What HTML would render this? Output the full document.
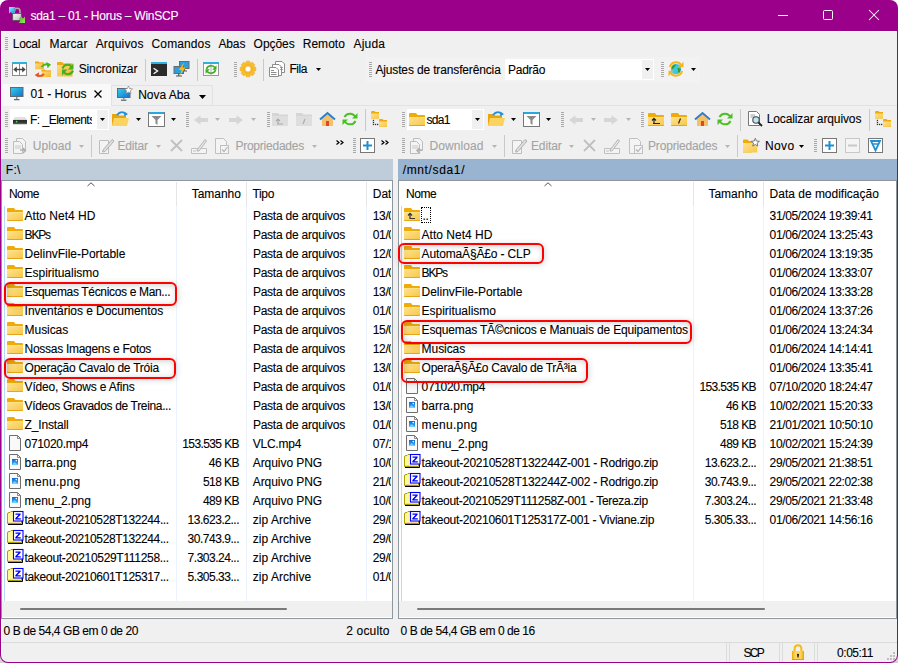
<!DOCTYPE html><html><head><meta charset="utf-8"><style>
html,body{margin:0;padding:0;background:#fff;}
body{width:898px;height:663px;position:relative;overflow:hidden;font-family:"Liberation Sans",sans-serif;font-size:12px;}
.t{position:absolute;white-space:nowrap;font-size:12px;line-height:15px;-webkit-text-stroke:0.1px currentColor;}
svg{overflow:visible}
</style></head><body><svg width="0" height="0" style="position:absolute"><defs><linearGradient id="fg" x1="0" y1="0" x2="1" y2="1"><stop offset="0" stop-color="#ffe290"/><stop offset="1" stop-color="#f7c745"/></linearGradient></defs></svg>
<div style="position:absolute;left:0px;top:652px;width:12px;height:11px;background:#d4d4d4"></div>
<div style="position:absolute;left:886px;top:652px;width:12px;height:11px;background:#d4d4d4"></div>
<div style="position:absolute;left:0px;top:0px;width:898px;height:663px;background:#9a0089;border-radius:8px 8px 8px 8px"></div>
<div style="position:absolute;left:1px;top:31px;width:896px;height:631px;background:#f0f0f0;border-radius:0 0 7px 7px"></div>
<div style="position:absolute;left:1px;top:31px;width:895px;height:1px;background:#fff"></div>
<div style="position:absolute;left:1px;top:31px;width:1px;height:624px;background:#fff"></div>
<svg style="position:absolute;left:9px;top:7px" width="16" height="16" viewBox="0 0 16 16"><defs><linearGradient id="lk" x1="0" y1="0" x2="1" y2="1"><stop offset="0" stop-color="#fafafa"/><stop offset="1" stop-color="#bdbdbd"/></linearGradient><linearGradient id="ba" x1="0" y1="0" x2="1" y2="1"><stop offset="0" stop-color="#7ff"/><stop offset="1" stop-color="#1a7fd8"/></linearGradient><linearGradient id="ga" x1="0" y1="0" x2="1" y2="1"><stop offset="0" stop-color="#4cb81e"/><stop offset="1" stop-color="#9be86a"/></linearGradient></defs><path d="M5.2 6.5V4.2Q5.2 1.3 8.1 1.3Q11 1.3 11 4.2V6.5" stroke="#a8a8a8" stroke-width="1.6" fill="none"/><path d="M0 0H6.8L5 1.8L7 3.8L3.8 7L1.8 5L0 6.8Z" fill="url(#ba)"/><rect x="3.7" y="6.4" width="8.6" height="7" fill="url(#lk)" stroke="#555" stroke-width=".8"/><path d="M16 9.5V16H9.5L11.5 14L9.6 12.1L12.1 9.6L14 11.5Z" fill="url(#ga)"/></svg>
<div class="t" style="left:30.40px;top:9.40px;letter-spacing:-0.241px;color:#fff;font-size:12px;">sda1 – 01 - Horus – WinSCP</div>
<div style="position:absolute;left:778px;top:15px;width:10px;height:1px;background:#fff"></div>
<div style="position:absolute;left:823px;top:10px;width:10px;height:10px;border:1px solid #fff;border-radius:1.5px;box-sizing:border-box"></div>
<svg style="position:absolute;left:869px;top:10px" width="10" height="10" viewBox="0 0 10 10"><path d="M0 0L10 10M10 0L0 10" stroke="#fff" stroke-width="1.05"/></svg>
<svg style="position:absolute;left:5px;top:37px" width="3" height="14" viewBox="0 0 3 14"><rect x="0" y="0" width="3" height="1" fill="#a8a8a8"/><rect x="0" y="2" width="3" height="1" fill="#a8a8a8"/><rect x="0" y="4" width="3" height="1" fill="#a8a8a8"/><rect x="0" y="6" width="3" height="1" fill="#a8a8a8"/><rect x="0" y="8" width="3" height="1" fill="#a8a8a8"/><rect x="0" y="10" width="3" height="1" fill="#a8a8a8"/><rect x="0" y="12" width="3" height="1" fill="#a8a8a8"/></svg>
<div class="t" style="left:12.80px;top:37.40px;letter-spacing:-0.272px;color:#000;font-size:12px;">Local</div>
<div class="t" style="left:49.60px;top:37.40px;letter-spacing:0.091px;color:#000;font-size:12px;">Marcar</div>
<div class="t" style="left:95.70px;top:37.40px;letter-spacing:0.145px;color:#000;font-size:12px;">Arquivos</div>
<div class="t" style="left:151.60px;top:37.40px;letter-spacing:0.110px;color:#000;font-size:12px;">Comandos</div>
<div class="t" style="left:218.40px;top:37.40px;letter-spacing:-0.115px;color:#000;font-size:12px;">Abas</div>
<div class="t" style="left:253.60px;top:37.40px;letter-spacing:-0.049px;color:#000;font-size:12px;">Opções</div>
<div class="t" style="left:302.70px;top:37.40px;letter-spacing:0.037px;color:#000;font-size:12px;">Remoto</div>
<div class="t" style="left:353.60px;top:37.40px;letter-spacing:0.178px;color:#000;font-size:12px;">Ajuda</div>
<svg style="position:absolute;left:5px;top:62px" width="3" height="16" viewBox="0 0 3 16"><rect x="0" y="0" width="3" height="1" fill="#a8a8a8"/><rect x="0" y="2" width="3" height="1" fill="#a8a8a8"/><rect x="0" y="4" width="3" height="1" fill="#a8a8a8"/><rect x="0" y="6" width="3" height="1" fill="#a8a8a8"/><rect x="0" y="8" width="3" height="1" fill="#a8a8a8"/><rect x="0" y="10" width="3" height="1" fill="#a8a8a8"/><rect x="0" y="12" width="3" height="1" fill="#a8a8a8"/><rect x="0" y="14" width="3" height="1" fill="#a8a8a8"/></svg>
<svg style="position:absolute;left:12px;top:62px" width="15" height="14" viewBox="0 0 15 14"><rect x=".5" y=".5" width="14" height="13" fill="#fff" stroke="#8a8a8a"/><rect x="0" y="0" width="15" height="2" fill="#2bb0e0"/><path d="M7.5 2V13.5" stroke="#8a8a8a"/><path d="M1.3 7.5L4.8 4.6V10.4Z M13.7 7.5L10.2 4.6V10.4Z" fill="#444"/><rect x="4" y="6.8" width="7" height="1.4" fill="#444"/></svg>
<svg style="position:absolute;left:34px;top:61px" width="17" height="16" viewBox="0 0 17 16"><defs><linearGradient id="yf" x1="0" y1="0" x2="1" y2="1"><stop offset="0" stop-color="#ffe08a"/><stop offset="1" stop-color="#f5b52a"/></linearGradient></defs><path d="M1 .5H4.5L5.5 1.5H10V8.2H1Z" fill="url(#yf)"/><path d="M1 .5H4.5L5.5 1.5H10V2.5H1Z" fill="#f2a91a"/><path d="M7.5 8.5H11L12 9.5H17V16H7.5Z" fill="url(#yf)"/><path d="M7.5 8.5H11L12 9.5H17V10.5H7.5Z" fill="#f2a91a"/><path d="M7.5 6Q10.5 2.2 14.3 3.6" stroke="#4bb21e" stroke-width="2" fill="none"/><path d="M12.2 1L17 3.4L13.6 7.2Z" fill="#4bb21e"/><path d="M10 12.8Q7 16.2 3.3 14.2" stroke="#e8561e" stroke-width="2" fill="none"/><path d="M5.2 11.3L.6 14L4.4 16.6Z" fill="#e8561e"/></svg>
<svg style="position:absolute;left:57px;top:62px" width="17" height="15" viewBox="0 0 17 15"><path d="M0 1Q0 0 1 0H5L6.5 1.5H15.5V14.5H0Z" fill="url(#yf)"/><path d="M0 1Q0 0 1 0H5L6.5 1.5H15.5V3H0Z" fill="#f2a91a"/><path d="M5.5 6.5Q7 2.8 10.8 2.8Q13.2 2.8 14.3 4.6" stroke="#45b020" stroke-width="2.1" fill="none"/><path d="M16.5 1.5V7.5H11Z" fill="#45b020"/><path d="M16 8.5Q14.5 12.2 10.7 12.2Q8.3 12.2 7.2 10.4" stroke="#45b020" stroke-width="2.1" fill="none"/><path d="M5 13.5V7.5H10.5Z" fill="#45b020"/></svg>
<div class="t" style="left:78.70px;top:62.40px;letter-spacing:-0.133px;color:#000;font-size:12px;">Sincronizar</div>
<div style="position:absolute;left:145px;top:59px;width:1px;height:22px;background:#c9c9c9"></div>
<svg style="position:absolute;left:151px;top:62px" width="16" height="14" viewBox="0 0 16 14"><rect x="0" y="0" width="16" height="14" fill="#2b2b2b"/><rect x="0" y="0" width="16" height="2" fill="#2bb0e0"/><path d="M2.6 6.2L6.6 9L2.6 11.8" stroke="#fff" stroke-width="1.3" fill="none"/></svg>
<svg style="position:absolute;left:173px;top:61px" width="17" height="16" viewBox="0 0 17 16"><rect x="6.5" y=".5" width="9.5" height="7" fill="#2aa0dc" stroke="#6a6a6a"/><path d="M9 10H14M11.25 7.5V10" stroke="#555" stroke-width="1.2"/><rect x="1" y="5.5" width="9.5" height="7" fill="#2aa0dc" stroke="#6a6a6a"/><path d="M3 15H9M5.75 12.5V15" stroke="#555" stroke-width="1.2"/><path d="M11 1.5L5.8 9H8.6L6.8 14.8L12.5 6.5H9.6Z" fill="#f7b819"/></svg>
<div style="position:absolute;left:197px;top:59px;width:1px;height:22px;background:#c9c9c9"></div>
<svg style="position:absolute;left:203px;top:62px" width="16" height="14" viewBox="0 0 16 14"><rect x=".5" y=".5" width="15" height="13" fill="#fff" stroke="#9a9a9a"/><rect x="0" y="0" width="16" height="2" fill="#2bb0e0"/><path d="M8 2V13.5" stroke="#b0b0b0"/><path d="M3.5 7Q4.5 3.8 8 3.8Q10.5 3.8 11.8 5.5" stroke="#3aab1c" stroke-width="1.6" fill="none"/><path d="M13.5 3.3V7.8H9.2Z" fill="#3aab1c"/><path d="M12.5 8Q11.5 11.2 8 11.2Q5.5 11.2 4.2 9.5" stroke="#3aab1c" stroke-width="1.6" fill="none"/><path d="M2.5 11.7V7.2H6.8Z" fill="#3aab1c"/></svg>
<svg style="position:absolute;left:234px;top:62px" width="3" height="16" viewBox="0 0 3 16"><rect x="0" y="0" width="3" height="1" fill="#a8a8a8"/><rect x="0" y="2" width="3" height="1" fill="#a8a8a8"/><rect x="0" y="4" width="3" height="1" fill="#a8a8a8"/><rect x="0" y="6" width="3" height="1" fill="#a8a8a8"/><rect x="0" y="8" width="3" height="1" fill="#a8a8a8"/><rect x="0" y="10" width="3" height="1" fill="#a8a8a8"/><rect x="0" y="12" width="3" height="1" fill="#a8a8a8"/><rect x="0" y="14" width="3" height="1" fill="#a8a8a8"/></svg>
<svg style="position:absolute;left:240px;top:61px" width="16" height="16" viewBox="0 0 16 16"><path d="M13.80 5.82L15.81 6.25L15.81 9.75L13.80 10.18L13.65 10.56L14.76 12.29L12.29 14.76L10.56 13.65L10.18 13.80L9.75 15.81L6.25 15.81L5.82 13.80L5.44 13.65L3.71 14.76L1.24 12.29L2.35 10.56L2.20 10.18L0.19 9.75L0.19 6.25L2.20 5.82L2.35 5.44L1.24 3.71L3.71 1.24L5.44 2.35L5.82 2.20L6.25 0.19L9.75 0.19L10.18 2.20L10.56 2.35L12.29 1.24L14.76 3.71L13.65 5.44Z" fill="#f7bd2a" stroke="#f0a818" stroke-width=".6"/><circle cx="8" cy="8" r="4.2" fill="none" stroke="#f5b21c" stroke-width="1"/><circle cx="8" cy="8" r="3" fill="#fbfbfb" stroke="#e8a010" stroke-width=".5"/></svg>
<div style="position:absolute;left:263px;top:59px;width:1px;height:22px;background:#c9c9c9"></div>
<svg style="position:absolute;left:269px;top:61px" width="16" height="16" viewBox="0 0 16 16"><path d="M6.5 .5H13L15.5 3V11.5H6.5Z" fill="#fff" stroke="#8c8c8c"/><path d="M3.5 3.5H10L12.5 6V14.5H3.5Z" fill="#fff" stroke="#8c8c8c"/><path d="M.5 6.5H7L9.5 9V15.5H.5Z" fill="#fff" stroke="#8c8c8c"/><path d="M2 9.5H5M2 11.5H7.5M2 13.5H7.5" stroke="#8c8c8c"/><path d="M11 6.5H14M11 8.5H14" stroke="#8c8c8c" stroke-width=".8"/></svg>
<div class="t" style="left:289.40px;top:62.40px;letter-spacing:-0.448px;color:#000;font-size:12px;">Fila</div>
<svg style="position:absolute;left:316px;top:68px" width="5" height="3" viewBox="0 0 5 3"><path d="M0 0H5L2.5 3Z" fill="#000"/></svg>
<div style="position:absolute;left:366px;top:57px;width:334px;height:26px;background:#f2f2f2"></div>
<svg style="position:absolute;left:369px;top:62px" width="3" height="16" viewBox="0 0 3 16"><rect x="0" y="0" width="3" height="1" fill="#a8a8a8"/><rect x="0" y="2" width="3" height="1" fill="#a8a8a8"/><rect x="0" y="4" width="3" height="1" fill="#a8a8a8"/><rect x="0" y="6" width="3" height="1" fill="#a8a8a8"/><rect x="0" y="8" width="3" height="1" fill="#a8a8a8"/><rect x="0" y="10" width="3" height="1" fill="#a8a8a8"/><rect x="0" y="12" width="3" height="1" fill="#a8a8a8"/><rect x="0" y="14" width="3" height="1" fill="#a8a8a8"/></svg>
<div class="t" style="left:375.40px;top:63.40px;letter-spacing:-0.144px;color:#000;font-size:12px;">Ajustes de transferência</div>
<div style="position:absolute;left:505px;top:59px;width:149px;height:21px;background:#fff"></div>
<div style="position:absolute;left:642px;top:60px;width:11px;height:19px;background:#f0f0f0"></div>
<svg style="position:absolute;left:645px;top:68px" width="5" height="3" viewBox="0 0 5 3"><path d="M0 0H5L2.5 3Z" fill="#000"/></svg>
<div class="t" style="left:508.00px;top:63.40px;letter-spacing:-0.258px;color:#000;font-size:12px;">Padrão</div>
<svg style="position:absolute;left:661px;top:62px" width="3" height="16" viewBox="0 0 3 16"><rect x="0" y="0" width="3" height="1" fill="#a8a8a8"/><rect x="0" y="2" width="3" height="1" fill="#a8a8a8"/><rect x="0" y="4" width="3" height="1" fill="#a8a8a8"/><rect x="0" y="6" width="3" height="1" fill="#a8a8a8"/><rect x="0" y="8" width="3" height="1" fill="#a8a8a8"/><rect x="0" y="10" width="3" height="1" fill="#a8a8a8"/><rect x="0" y="12" width="3" height="1" fill="#a8a8a8"/><rect x="0" y="14" width="3" height="1" fill="#a8a8a8"/></svg>
<svg style="position:absolute;left:668px;top:61px" width="16" height="16" viewBox="0 0 16 16"><circle cx="8" cy="8" r="5.2" fill="#3fc6e6"/><path d="M4.5 5Q6 3 8 3.5Q7.5 5.5 6 6.5Q5.5 8 4 8Q3 6.5 4.5 5Z M9.5 7Q11.5 6.5 12.8 8Q12.5 11 10.5 12Q9.5 10.5 10 9Z" fill="#3a9a2a"/><path d="M1.8 6Q3.5 1.2 8 1.2Q11.5 1.2 13 4" stroke="#fbb416" stroke-width="2" fill="none"/><path d="M15.5 0.8V6.2H10.2Z" fill="#fbb416"/><path d="M14.2 10Q12.5 14.8 8 14.8Q4.5 14.8 3 12" stroke="#fbb416" stroke-width="2" fill="none"/><path d="M.5 15.2V9.8H5.8Z" fill="#fbb416"/></svg>
<svg style="position:absolute;left:691px;top:68px" width="5" height="3" viewBox="0 0 5 3"><path d="M0 0H5L2.5 3Z" fill="#000"/></svg>
<div style="position:absolute;left:2px;top:84px;width:109px;height:22px;background:#f9f9f9"></div>
<svg style="position:absolute;left:10px;top:86px" width="14" height="15" viewBox="0 0 14 15"><defs><linearGradient id="scr" x1="0" y1="0" x2="1" y2="1"><stop offset="0" stop-color="#35d0f0"/><stop offset="1" stop-color="#1272c8"/></linearGradient></defs><rect x=".5" y="1.5" width="12.5" height="9" fill="url(#scr)" stroke="#5f6b73"/><path d="M6.75 11V13" stroke="#8a9299" stroke-width="1.5"/><path d="M4 13.6H9.5" stroke="#5f6b73" stroke-width="1.3"/></svg>
<div class="t" style="left:30.60px;top:87.40px;letter-spacing:-0.002px;color:#000;font-size:12px;">01 - Horus</div>
<svg style="position:absolute;left:94px;top:90px" width="8" height="8" viewBox="0 0 8 8"><path d="M.5 .5L7.5 7.5M7.5 .5L.5 7.5" stroke="#000" stroke-width="1.3"/></svg>
<div style="position:absolute;left:111px;top:85px;width:102px;height:21px;background:#f0f0f0;border:1px solid #e2e2e2;border-bottom:none;box-sizing:border-box"></div>
<svg style="position:absolute;left:117px;top:86px" width="16" height="15" viewBox="0 0 16 15"><rect x=".5" y="2.5" width="12.5" height="9" fill="url(#scr)" stroke="#5f6b73"/><path d="M6.75 12V13.5" stroke="#8a9299" stroke-width="1.5"/><path d="M4 14.2H9.5" stroke="#5f6b73" stroke-width="1.3"/><path d="M11.5 0L12.7 2.6L15.5 2.9L13.4 4.8L14 7.6L11.5 6.2L9 7.6L9.6 4.8L7.5 2.9L10.3 2.6Z" fill="#fff" stroke="#777" stroke-width=".6"/></svg>
<div class="t" style="left:138.20px;top:87.90px;letter-spacing:-0.033px;color:#000;font-size:12px;">Nova Aba</div>
<svg style="position:absolute;left:198.5px;top:94.5px" width="7" height="4" viewBox="0 0 7 4"><path d="M0 0H7L3.5 4Z" fill="#000"/></svg>
<div style="position:absolute;left:111px;top:105px;width:786px;height:1px;background:#e2e2e2"></div>
<svg style="position:absolute;left:5px;top:112px" width="3" height="16" viewBox="0 0 3 16"><rect x="0" y="0" width="3" height="1" fill="#a8a8a8"/><rect x="0" y="2" width="3" height="1" fill="#a8a8a8"/><rect x="0" y="4" width="3" height="1" fill="#a8a8a8"/><rect x="0" y="6" width="3" height="1" fill="#a8a8a8"/><rect x="0" y="8" width="3" height="1" fill="#a8a8a8"/><rect x="0" y="10" width="3" height="1" fill="#a8a8a8"/><rect x="0" y="12" width="3" height="1" fill="#a8a8a8"/><rect x="0" y="14" width="3" height="1" fill="#a8a8a8"/></svg>
<div style="position:absolute;left:10px;top:109px;width:99px;height:21px;background:#fff"></div>
<div style="position:absolute;left:97px;top:110px;width:11px;height:19px;background:#f0f0f0"></div>
<svg style="position:absolute;left:100px;top:118px" width="5" height="3" viewBox="0 0 5 3"><path d="M0 0H5L2.5 3Z" fill="#000"/></svg>
<svg style="position:absolute;left:13px;top:116px" width="14" height="9" viewBox="0 0 14 9"><path d="M1.8 1H12.2L13.6 3.8H.4Z" fill="#e2e2e4"/><rect x="0" y="3.9" width="14" height="4.2" fill="#2e2e2e"/><rect x="0" y="6.6" width="14" height="1.5" fill="#555"/><circle cx="3.6" cy="5.6" r=".85" fill="#2f2"/></svg>
<div style="position:absolute;left:30px;top:105px;width:62px;height:24px;overflow:hidden">
<div class="t" style="left:0.00px;top:8.40px;letter-spacing:-0.504px;color:#000;font-size:12px;">F: _Elements (F:)</div>
</div>
<svg style="position:absolute;left:112px;top:111px" width="17" height="16" viewBox="0 0 17 16"><path d="M0 3H6L7 4.5H14V14H0Z" fill="#e9a510"/><path d="M2 7H17L15 15H0Z" fill="#fcd35e"/><path d="M5 4Q9 -1 14 3" stroke="#1f8fe0" stroke-width="1.8" fill="none"/><path d="M12 0.5L16 3L12.3 5.5Z" fill="#1f8fe0"/></svg>
<svg style="position:absolute;left:136px;top:118px" width="5" height="3" viewBox="0 0 5 3"><path d="M0 0H5L2.5 3Z" fill="#000"/></svg>
<svg style="position:absolute;left:148px;top:111px" width="17" height="16" viewBox="0 0 17 16"><rect x=".5" y="1.5" width="16" height="14" fill="#fff" stroke="#777"/><rect x="1" y="1" width="15" height="2" fill="#2ba7e0"/><path d="M3.5 5H13.5L9.5 9V14L7.5 12.5V9Z" fill="#8a8a8a"/></svg>
<svg style="position:absolute;left:170.5px;top:118px" width="5" height="3" viewBox="0 0 5 3"><path d="M0 0H5L2.5 3Z" fill="#000"/></svg>
<svg style="position:absolute;left:186px;top:112px" width="3" height="16" viewBox="0 0 3 16"><rect x="0" y="0" width="3" height="1" fill="#a8a8a8"/><rect x="0" y="2" width="3" height="1" fill="#a8a8a8"/><rect x="0" y="4" width="3" height="1" fill="#a8a8a8"/><rect x="0" y="6" width="3" height="1" fill="#a8a8a8"/><rect x="0" y="8" width="3" height="1" fill="#a8a8a8"/><rect x="0" y="10" width="3" height="1" fill="#a8a8a8"/><rect x="0" y="12" width="3" height="1" fill="#a8a8a8"/><rect x="0" y="14" width="3" height="1" fill="#a8a8a8"/></svg>
<svg style="position:absolute;left:194px;top:114.5px" width="15" height="10" viewBox="0 0 15 10"><path d="M0 5L6.5 0.3V3H14V7H6.5V9.7Z" fill="#d6d6d6"/></svg>
<svg style="position:absolute;left:215px;top:118px" width="5" height="3" viewBox="0 0 5 3"><path d="M0 0H5L2.5 3Z" fill="#b5b5b5"/></svg>
<svg style="position:absolute;left:228.5px;top:114.5px" width="15" height="10" viewBox="0 0 15 10"><path d="M14 5L7.5 0.3V3H0V7H7.5V9.7Z" fill="#d6d6d6"/></svg>
<svg style="position:absolute;left:251px;top:118px" width="5" height="3" viewBox="0 0 5 3"><path d="M0 0H5L2.5 3Z" fill="#b5b5b5"/></svg>
<svg style="position:absolute;left:267px;top:112px" width="3" height="16" viewBox="0 0 3 16"><rect x="0" y="0" width="3" height="1" fill="#a8a8a8"/><rect x="0" y="2" width="3" height="1" fill="#a8a8a8"/><rect x="0" y="4" width="3" height="1" fill="#a8a8a8"/><rect x="0" y="6" width="3" height="1" fill="#a8a8a8"/><rect x="0" y="8" width="3" height="1" fill="#a8a8a8"/><rect x="0" y="10" width="3" height="1" fill="#a8a8a8"/><rect x="0" y="12" width="3" height="1" fill="#a8a8a8"/><rect x="0" y="14" width="3" height="1" fill="#a8a8a8"/></svg>
<svg style="position:absolute;left:272px;top:111px" width="16" height="16" viewBox="0 0 16 16"><path d="M0 2H6L7.5 3.5H16V15H0Z" fill="#d5d5d5"/><path d="M0 5H16V15H0Z" fill="#dedede"/><path d="M5 13H11M6 13V8M4 10L6 8L8 10" stroke="#aaa" stroke-width="1.1" fill="none"/></svg>
<svg style="position:absolute;left:296px;top:111px" width="16" height="16" viewBox="0 0 16 16"><path d="M0 2H6L7.5 3.5H16V15H0Z" fill="#d5d5d5"/><path d="M0 5H16V15H0Z" fill="#dedede"/><path d="M9 8L7 13" stroke="#aaa" stroke-width="1.1"/></svg>
<svg style="position:absolute;left:318.5px;top:111px" width="17" height="16" viewBox="0 0 17 16"><path d="M3 8V15H14V8L8.5 3Z" fill="#f5c06a"/><path d="M1 8.5L8.5 2L16 8.5" stroke="#2e7fc8" stroke-width="2" fill="none"/><rect x="7" y="10" width="3" height="5" fill="#e04a1a"/></svg>
<svg style="position:absolute;left:342px;top:111px" width="16" height="16" viewBox="0 0 16 16"><path d="M13.5 6.5A6 6 0 0 0 2.5 6M2.5 9.5A6 6 0 0 0 13.5 10" stroke="#4cc023" stroke-width="2" fill="none"/><path d="M15.5 2V7.5H10Z M.5 14V8.5H6Z" fill="#4cc023"/></svg>
<div style="position:absolute;left:365px;top:109px;width:1px;height:22px;background:#c9c9c9"></div>
<svg style="position:absolute;left:371px;top:111px" width="17" height="16" viewBox="0 0 17 16"><path d="M0 1Q0 0 1 0H3.5L4.5 1H8V7.6H0Z" fill="#efab08"/><path d="M0 2.4H8V7Q8 7.6 7.4 7.6H.6Q0 7.6 0 7Z" fill="url(#fg)"/><path d="M8 9Q8 8 9 8H11.5L12.5 9H16V15.7H8Z" fill="#efab08"/><path d="M8 10.4H16V15.1Q16 15.7 15.4 15.7H8.6Q8 15.7 8 15.1Z" fill="url(#fg)"/><rect x="1.8" y="8.8" width="1.3" height="1.3" fill="#333"/><rect x="1.8" y="10.8" width="1.3" height="1.3" fill="#333"/><rect x="1.8" y="12.8" width="1.3" height="1.3" fill="#333"/><rect x="3.9" y="12.8" width="1.3" height="1.3" fill="#333"/><rect x="6" y="12.8" width="1.3" height="1.3" fill="#333"/></svg>
<svg style="position:absolute;left:5px;top:138px" width="3" height="16" viewBox="0 0 3 16"><rect x="0" y="0" width="3" height="1" fill="#a8a8a8"/><rect x="0" y="2" width="3" height="1" fill="#a8a8a8"/><rect x="0" y="4" width="3" height="1" fill="#a8a8a8"/><rect x="0" y="6" width="3" height="1" fill="#a8a8a8"/><rect x="0" y="8" width="3" height="1" fill="#a8a8a8"/><rect x="0" y="10" width="3" height="1" fill="#a8a8a8"/><rect x="0" y="12" width="3" height="1" fill="#a8a8a8"/><rect x="0" y="14" width="3" height="1" fill="#a8a8a8"/></svg>
<svg style="position:absolute;left:12px;top:138px" width="16" height="16" viewBox="0 0 16 16"><path d="M4.5 .5H10.5L13.5 3.5V12.5H4.5Z" fill="#f4f4f4" stroke="#bdbdbd"/><path d="M1.5 3.5H7.5L10.5 6.5V15.5H1.5Z" fill="#f4f4f4" stroke="#bdbdbd"/><path d="M3 8H9M3 10H9" stroke="#c8c8c8"/><path d="M8 12H13M11 10L13.5 12.5L11 15" stroke="#b0b0b0" stroke-width="1.5" fill="none"/></svg>
<div class="t" style="left:32.80px;top:139.40px;letter-spacing:0.074px;color:#a3a3a3;font-size:12px;">Upload</div>
<svg style="position:absolute;left:79px;top:145px" width="5" height="3" viewBox="0 0 5 3"><path d="M0 0H5L2.5 3Z" fill="#b5b5b5"/></svg>
<div style="position:absolute;left:91px;top:135px;width:1px;height:22px;background:#c9c9c9"></div>
<svg style="position:absolute;left:99px;top:138px" width="16" height="16" viewBox="0 0 16 16"><path d="M.5 2.5H9.5V15.5H.5Z" fill="#f4f4f4" stroke="#bdbdbd"/><path d="M4 12L13 1.5L15 3L6 13.5L3.5 14Z" fill="#e0e0e0" stroke="#b0b0b0"/></svg>
<div class="t" style="left:117.40px;top:139.40px;letter-spacing:-0.129px;color:#a3a3a3;font-size:12px;">Editar</div>
<svg style="position:absolute;left:156px;top:145px" width="5" height="3" viewBox="0 0 5 3"><path d="M0 0H5L2.5 3Z" fill="#b5b5b5"/></svg>
<svg style="position:absolute;left:170px;top:139px" width="13" height="13" viewBox="0 0 13 13"><path d="M1 1L12 12M12 1L1 12" stroke="#c0c0c0" stroke-width="1.8"/></svg>
<svg style="position:absolute;left:191px;top:138px" width="16" height="16" viewBox="0 0 16 16"><path d="M.5 10.5H15.5V15.5H.5Z" fill="#f4f4f4" stroke="#c0c0c0"/><path d="M2 13H5" stroke="#c0c0c0"/><path d="M6 12L14 1.5L15.5 3L8 13H6Z" fill="#e6e6e6" stroke="#b5b5b5"/></svg>
<svg style="position:absolute;left:215px;top:138px" width="14" height="16" viewBox="0 0 14 16"><path d="M.5 .5H8.5L11.5 3.5V15.5H.5Z" fill="#f4f4f4" stroke="#c0c0c0"/><rect x="5.5" y="7.5" width="8" height="8" fill="#f4f4f4" stroke="#c0c0c0"/><path d="M7 11.5L9 13.5L12.5 9" stroke="#b5b5b5" stroke-width="1.2" fill="none"/></svg>
<div class="t" style="left:235.40px;top:139.40px;letter-spacing:-0.234px;color:#a3a3a3;font-size:12px;">Propriedades</div>
<svg style="position:absolute;left:312px;top:145px" width="5" height="3" viewBox="0 0 5 3"><path d="M0 0H5L2.5 3Z" fill="#b5b5b5"/></svg>
<svg style="position:absolute;left:336px;top:140px" width="8" height="5" viewBox="0 0 8 5"><path d="M.5 .5L3 2.5L.5 4.5M4.5 .5L7 2.5L4.5 4.5" stroke="#000" stroke-width="1.2" fill="none"/></svg>
<svg style="position:absolute;left:353px;top:138px" width="3" height="16" viewBox="0 0 3 16"><rect x="0" y="0" width="3" height="1" fill="#a8a8a8"/><rect x="0" y="2" width="3" height="1" fill="#a8a8a8"/><rect x="0" y="4" width="3" height="1" fill="#a8a8a8"/><rect x="0" y="6" width="3" height="1" fill="#a8a8a8"/><rect x="0" y="8" width="3" height="1" fill="#a8a8a8"/><rect x="0" y="10" width="3" height="1" fill="#a8a8a8"/><rect x="0" y="12" width="3" height="1" fill="#a8a8a8"/><rect x="0" y="14" width="3" height="1" fill="#a8a8a8"/></svg>
<svg style="position:absolute;left:360px;top:138px" width="15" height="15" viewBox="0 0 15 15"><rect x=".5" y=".5" width="14" height="14" fill="#fff" stroke="#777"/><path d="M7.5 3V12M3 7.5H12" stroke="#1e90d0" stroke-width="2"/></svg>
<svg style="position:absolute;left:381px;top:140px" width="8" height="5" viewBox="0 0 8 5"><path d="M.5 .5L3 2.5L.5 4.5M4.5 .5L7 2.5L4.5 4.5" stroke="#000" stroke-width="1.2" fill="none"/></svg>
<svg style="position:absolute;left:402px;top:112px" width="3" height="16" viewBox="0 0 3 16"><rect x="0" y="0" width="3" height="1" fill="#a8a8a8"/><rect x="0" y="2" width="3" height="1" fill="#a8a8a8"/><rect x="0" y="4" width="3" height="1" fill="#a8a8a8"/><rect x="0" y="6" width="3" height="1" fill="#a8a8a8"/><rect x="0" y="8" width="3" height="1" fill="#a8a8a8"/><rect x="0" y="10" width="3" height="1" fill="#a8a8a8"/><rect x="0" y="12" width="3" height="1" fill="#a8a8a8"/><rect x="0" y="14" width="3" height="1" fill="#a8a8a8"/></svg>
<div style="position:absolute;left:407px;top:109px;width:77px;height:21px;background:#fff"></div>
<div style="position:absolute;left:472px;top:110px;width:11px;height:19px;background:#f0f0f0"></div>
<svg style="position:absolute;left:475px;top:118px" width="5" height="3" viewBox="0 0 5 3"><path d="M0 0H5L2.5 3Z" fill="#000"/></svg>
<svg style="position:absolute;left:409px;top:111px" width="16" height="16" viewBox="0 0 16 16"><path d="M0 3Q0 2 1 2H7L8.5 4H15Q16 4 16 5V8H0Z" fill="#efab08"/><path d="M0 6.2H16V14Q16 15 15 15H1Q0 15 0 14Z" fill="url(#fg)"/><rect x="0" y="6.2" width="16" height=".8" fill="#ffeaa0" opacity=".8"/><path d="M0 14H16V14.2Q16 15 15 15H1Q0 15 0 14.2Z" fill="#e6a51a"/></svg>
<div class="t" style="left:426.40px;top:113.40px;letter-spacing:-0.672px;color:#000;font-size:12px;">sda1</div>
<svg style="position:absolute;left:488px;top:111px" width="17" height="16" viewBox="0 0 17 16"><path d="M0 3H6L7 4.5H14V14H0Z" fill="#e9a510"/><path d="M2 7H17L15 15H0Z" fill="#fcd35e"/><path d="M5 4Q9 -1 14 3" stroke="#1f8fe0" stroke-width="1.8" fill="none"/><path d="M12 0.5L16 3L12.3 5.5Z" fill="#1f8fe0"/></svg>
<svg style="position:absolute;left:511px;top:118px" width="5" height="3" viewBox="0 0 5 3"><path d="M0 0H5L2.5 3Z" fill="#000"/></svg>
<svg style="position:absolute;left:523px;top:111px" width="17" height="16" viewBox="0 0 17 16"><rect x=".5" y="1.5" width="16" height="14" fill="#fff" stroke="#777"/><rect x="1" y="1" width="15" height="2" fill="#2ba7e0"/><path d="M3.5 5H13.5L9.5 9V14L7.5 12.5V9Z" fill="#8a8a8a"/></svg>
<svg style="position:absolute;left:546px;top:118px" width="5" height="3" viewBox="0 0 5 3"><path d="M0 0H5L2.5 3Z" fill="#000"/></svg>
<svg style="position:absolute;left:561px;top:112px" width="3" height="16" viewBox="0 0 3 16"><rect x="0" y="0" width="3" height="1" fill="#a8a8a8"/><rect x="0" y="2" width="3" height="1" fill="#a8a8a8"/><rect x="0" y="4" width="3" height="1" fill="#a8a8a8"/><rect x="0" y="6" width="3" height="1" fill="#a8a8a8"/><rect x="0" y="8" width="3" height="1" fill="#a8a8a8"/><rect x="0" y="10" width="3" height="1" fill="#a8a8a8"/><rect x="0" y="12" width="3" height="1" fill="#a8a8a8"/><rect x="0" y="14" width="3" height="1" fill="#a8a8a8"/></svg>
<svg style="position:absolute;left:569px;top:114.5px" width="15" height="10" viewBox="0 0 15 10"><path d="M0 5L6.5 0.3V3H14V7H6.5V9.7Z" fill="#d6d6d6"/></svg>
<svg style="position:absolute;left:591px;top:118px" width="5" height="3" viewBox="0 0 5 3"><path d="M0 0H5L2.5 3Z" fill="#b5b5b5"/></svg>
<svg style="position:absolute;left:604px;top:114.5px" width="15" height="10" viewBox="0 0 15 10"><path d="M14 5L7.5 0.3V3H0V7H7.5V9.7Z" fill="#d6d6d6"/></svg>
<svg style="position:absolute;left:626px;top:118px" width="5" height="3" viewBox="0 0 5 3"><path d="M0 0H5L2.5 3Z" fill="#b5b5b5"/></svg>
<svg style="position:absolute;left:641px;top:112px" width="3" height="16" viewBox="0 0 3 16"><rect x="0" y="0" width="3" height="1" fill="#a8a8a8"/><rect x="0" y="2" width="3" height="1" fill="#a8a8a8"/><rect x="0" y="4" width="3" height="1" fill="#a8a8a8"/><rect x="0" y="6" width="3" height="1" fill="#a8a8a8"/><rect x="0" y="8" width="3" height="1" fill="#a8a8a8"/><rect x="0" y="10" width="3" height="1" fill="#a8a8a8"/><rect x="0" y="12" width="3" height="1" fill="#a8a8a8"/><rect x="0" y="14" width="3" height="1" fill="#a8a8a8"/></svg>
<svg style="position:absolute;left:648px;top:111px" width="16" height="16" viewBox="0 0 16 16"><path d="M0 3Q0 2 1 2H7L8.5 4H15Q16 4 16 5V8H0Z" fill="#efab08"/><path d="M0 6.2H16V14Q16 15 15 15H1Q0 15 0 14Z" fill="url(#fg)"/><rect x="0" y="6.2" width="16" height=".8" fill="#ffeaa0" opacity=".8"/><path d="M0 14H16V14.2Q16 15 15 15H1Q0 15 0 14.2Z" fill="#e6a51a"/></svg>
<svg style="position:absolute;left:648px;top:111px" width="16" height="16" viewBox="0 0 16 16"><path d="M5 12.5H12M6 12.5V7.5M4 9.5L6 7.3L8 9.5" stroke="#222" stroke-width="1.2" fill="none"/></svg>
<svg style="position:absolute;left:671px;top:111px" width="16" height="16" viewBox="0 0 16 16"><path d="M0 3Q0 2 1 2H7L8.5 4H15Q16 4 16 5V8H0Z" fill="#efab08"/><path d="M0 6.2H16V14Q16 15 15 15H1Q0 15 0 14Z" fill="url(#fg)"/><rect x="0" y="6.2" width="16" height=".8" fill="#ffeaa0" opacity=".8"/><path d="M0 14H16V14.2Q16 15 15 15H1Q0 15 0 14.2Z" fill="#e6a51a"/></svg>
<svg style="position:absolute;left:671px;top:111px" width="16" height="16" viewBox="0 0 16 16"><path d="M9.5 7.5L7.5 12.5" stroke="#222" stroke-width="1.2"/></svg>
<svg style="position:absolute;left:693.5px;top:111px" width="17" height="16" viewBox="0 0 17 16"><path d="M3 8V15H14V8L8.5 3Z" fill="#f5c06a"/><path d="M1 8.5L8.5 2L16 8.5" stroke="#2e7fc8" stroke-width="2" fill="none"/><rect x="7" y="10" width="3" height="5" fill="#e04a1a"/></svg>
<svg style="position:absolute;left:716.5px;top:111px" width="16" height="16" viewBox="0 0 16 16"><path d="M13.5 6.5A6 6 0 0 0 2.5 6M2.5 9.5A6 6 0 0 0 13.5 10" stroke="#4cc023" stroke-width="2" fill="none"/><path d="M15.5 2V7.5H10Z M.5 14V8.5H6Z" fill="#4cc023"/></svg>
<div style="position:absolute;left:740px;top:109px;width:1px;height:22px;background:#c9c9c9"></div>
<svg style="position:absolute;left:748px;top:111px" width="15" height="16" viewBox="0 0 15 16"><path d="M.5 .5H8.5L11.5 3.5V14.5H.5Z" fill="#fff" stroke="#777"/><path d="M2.5 4H7M2.5 6H9" stroke="#999"/><circle cx="8" cy="9" r="3.2" fill="#bfe6f7" stroke="#4a4a4a" stroke-width="1.1"/><path d="M10.3 11.3L14 15" stroke="#222" stroke-width="1.8"/></svg>
<div class="t" style="left:766.70px;top:112.40px;letter-spacing:-0.119px;color:#000;font-size:12px;">Localizar arquivos</div>
<div style="position:absolute;left:869px;top:109px;width:1px;height:22px;background:#c9c9c9"></div>
<svg style="position:absolute;left:875px;top:111px" width="17" height="16" viewBox="0 0 17 16"><path d="M0 1Q0 0 1 0H3.5L4.5 1H8V7.6H0Z" fill="#efab08"/><path d="M0 2.4H8V7Q8 7.6 7.4 7.6H.6Q0 7.6 0 7Z" fill="url(#fg)"/><path d="M8 9Q8 8 9 8H11.5L12.5 9H16V15.7H8Z" fill="#efab08"/><path d="M8 10.4H16V15.1Q16 15.7 15.4 15.7H8.6Q8 15.7 8 15.1Z" fill="url(#fg)"/><rect x="1.8" y="8.8" width="1.3" height="1.3" fill="#333"/><rect x="1.8" y="10.8" width="1.3" height="1.3" fill="#333"/><rect x="1.8" y="12.8" width="1.3" height="1.3" fill="#333"/><rect x="3.9" y="12.8" width="1.3" height="1.3" fill="#333"/><rect x="6" y="12.8" width="1.3" height="1.3" fill="#333"/></svg>
<svg style="position:absolute;left:402px;top:138px" width="3" height="16" viewBox="0 0 3 16"><rect x="0" y="0" width="3" height="1" fill="#a8a8a8"/><rect x="0" y="2" width="3" height="1" fill="#a8a8a8"/><rect x="0" y="4" width="3" height="1" fill="#a8a8a8"/><rect x="0" y="6" width="3" height="1" fill="#a8a8a8"/><rect x="0" y="8" width="3" height="1" fill="#a8a8a8"/><rect x="0" y="10" width="3" height="1" fill="#a8a8a8"/><rect x="0" y="12" width="3" height="1" fill="#a8a8a8"/><rect x="0" y="14" width="3" height="1" fill="#a8a8a8"/></svg>
<svg style="position:absolute;left:409px;top:138px" width="16" height="16" viewBox="0 0 16 16"><path d="M4.5 .5H10.5L13.5 3.5V12.5H4.5Z" fill="#f4f4f4" stroke="#bdbdbd"/><path d="M1.5 3.5H7.5L10.5 6.5V15.5H1.5Z" fill="#f4f4f4" stroke="#bdbdbd"/><path d="M3 8H9M3 10H9" stroke="#c8c8c8"/><path d="M8 12H13M10.5 10L8 12.5L10.5 15" stroke="#b0b0b0" stroke-width="1.5" fill="none"/></svg>
<div class="t" style="left:429.40px;top:139.40px;letter-spacing:0.089px;color:#a3a3a3;font-size:12px;">Download</div>
<svg style="position:absolute;left:492px;top:145px" width="5" height="3" viewBox="0 0 5 3"><path d="M0 0H5L2.5 3Z" fill="#b5b5b5"/></svg>
<div style="position:absolute;left:504px;top:135px;width:1px;height:22px;background:#c9c9c9"></div>
<svg style="position:absolute;left:512px;top:138px" width="16" height="16" viewBox="0 0 16 16"><path d="M.5 2.5H9.5V15.5H.5Z" fill="#f4f4f4" stroke="#bdbdbd"/><path d="M4 12L13 1.5L15 3L6 13.5L3.5 14Z" fill="#e0e0e0" stroke="#b0b0b0"/></svg>
<div class="t" style="left:530.90px;top:139.40px;letter-spacing:-0.089px;color:#a3a3a3;font-size:12px;">Editar</div>
<svg style="position:absolute;left:569px;top:145px" width="5" height="3" viewBox="0 0 5 3"><path d="M0 0H5L2.5 3Z" fill="#b5b5b5"/></svg>
<svg style="position:absolute;left:583px;top:139px" width="13" height="13" viewBox="0 0 13 13"><path d="M1 1L12 12M12 1L1 12" stroke="#c0c0c0" stroke-width="1.8"/></svg>
<svg style="position:absolute;left:604px;top:138px" width="16" height="16" viewBox="0 0 16 16"><path d="M.5 10.5H15.5V15.5H.5Z" fill="#f4f4f4" stroke="#c0c0c0"/><path d="M2 13H5" stroke="#c0c0c0"/><path d="M6 12L14 1.5L15.5 3L8 13H6Z" fill="#e6e6e6" stroke="#b5b5b5"/></svg>
<svg style="position:absolute;left:629px;top:138px" width="14" height="16" viewBox="0 0 14 16"><path d="M.5 .5H8.5L11.5 3.5V15.5H.5Z" fill="#f4f4f4" stroke="#c0c0c0"/><rect x="5.5" y="7.5" width="8" height="8" fill="#f4f4f4" stroke="#c0c0c0"/><path d="M7 11.5L9 13.5L12.5 9" stroke="#b5b5b5" stroke-width="1.2" fill="none"/></svg>
<div class="t" style="left:648.00px;top:139.40px;letter-spacing:-0.180px;color:#a3a3a3;font-size:12px;">Propriedades</div>
<svg style="position:absolute;left:725px;top:145px" width="5" height="3" viewBox="0 0 5 3"><path d="M0 0H5L2.5 3Z" fill="#b5b5b5"/></svg>
<div style="position:absolute;left:737px;top:135px;width:1px;height:22px;background:#c9c9c9"></div>
<svg style="position:absolute;left:743px;top:138px" width="17" height="16" viewBox="0 0 17 16"><path d="M0 2.5Q0 1.5 1 1.5H4.5L6 3H9V14.5H0Z" fill="#efab08"/><path d="M0 5H14.2V14.5H0Z" fill="url(#fg)"/><path d="M12.30 0.30L13.42 3.06L16.39 3.27L14.11 5.19L14.83 8.08L12.30 6.50L9.77 8.08L10.49 5.19L8.21 3.27L11.18 3.06Z" fill="#fff" stroke="#777" stroke-width="1"/></svg>
<div class="t" style="left:764.90px;top:139.40px;letter-spacing:0.395px;color:#000;font-size:12px;">Novo</div>
<svg style="position:absolute;left:799px;top:145px" width="5" height="3" viewBox="0 0 5 3"><path d="M0 0H5L2.5 3Z" fill="#000"/></svg>
<svg style="position:absolute;left:814px;top:139px" width="3" height="14" viewBox="0 0 3 14"><rect x="0" y="0" width="3" height="1" fill="#a8a8a8"/><rect x="0" y="2" width="3" height="1" fill="#a8a8a8"/><rect x="0" y="4" width="3" height="1" fill="#a8a8a8"/><rect x="0" y="6" width="3" height="1" fill="#a8a8a8"/><rect x="0" y="8" width="3" height="1" fill="#a8a8a8"/><rect x="0" y="10" width="3" height="1" fill="#a8a8a8"/><rect x="0" y="12" width="3" height="1" fill="#a8a8a8"/></svg>
<svg style="position:absolute;left:822px;top:138px" width="15" height="15" viewBox="0 0 15 15"><rect x=".5" y=".5" width="14" height="14" fill="#fff" stroke="#777"/><path d="M7.5 3V12M3 7.5H12" stroke="#1e90d0" stroke-width="2"/></svg>
<svg style="position:absolute;left:845px;top:138px" width="15" height="15" viewBox="0 0 15 15"><rect x=".5" y=".5" width="14" height="14" fill="#f4f4f4" stroke="#c8c8c8"/><path d="M3 7.5H12" stroke="#c8c8c8" stroke-width="2"/></svg>
<svg style="position:absolute;left:868px;top:138px" width="15" height="15" viewBox="0 0 15 15"><rect x=".5" y=".5" width="14" height="14" fill="#fff" stroke="#777"/><path d="M3 3H12L7.5 12.5Z" fill="none" stroke="#1e90d0" stroke-width="1.8"/><path d="M4.5 6H10.5" stroke="#1e90d0" stroke-width="1.5"/></svg>
<div style="position:absolute;left:1px;top:159px;width:392px;height:21px;background:#bfcddb"></div>
<div class="t" style="left:5.70px;top:163.40px;letter-spacing:0.358px;color:#000;font-size:12px;">F:\</div>
<div style="position:absolute;left:1px;top:180px;width:392px;height:439px;background:#fff;border:1px solid #8e969e;box-sizing:border-box"></div>
<div style="position:absolute;left:176px;top:182px;width:1px;height:24px;background:#e5e5e5"></div>
<div style="position:absolute;left:246px;top:182px;width:1px;height:24px;background:#e5e5e5"></div>
<div style="position:absolute;left:366px;top:182px;width:1px;height:24px;background:#e5e5e5"></div>
<div style="position:absolute;left:4px;top:206px;width:1px;height:395px;background:#bcd8f8"></div>
<div style="position:absolute;left:176px;top:206px;width:1px;height:395px;background:#edf3fc"></div>
<div style="position:absolute;left:246px;top:206px;width:1px;height:395px;background:#edf3fc"></div>
<div style="position:absolute;left:366px;top:206px;width:1px;height:395px;background:#edf3fc"></div>
<div style="position:absolute;left:2px;top:601px;width:390px;height:16px;background:#f0f0f0"></div>
<div style="position:absolute;left:2px;top:617px;width:390px;height:1px;background:#fff"></div>
<div style="position:absolute;left:2px;top:181px;width:389px;height:420px;overflow:hidden">
<div class="t" style="left:6.90px;top:6.40px;letter-spacing:-0.465px;color:#000;font-size:12px;">Nome</div>
<svg style="position:absolute;left:85px;top:1px" width="8" height="5" viewBox="0 0 8 5"><path d="M.5 4L4 .8L7.5 4" stroke="#555" stroke-width="1" fill="none"/></svg>
<div class="t" style="left:189.80px;top:6.40px;letter-spacing:-0.060px;color:#000;font-size:12px;">Tamanho</div>
<div class="t" style="left:250.40px;top:6.40px;letter-spacing:-0.329px;color:#000;font-size:12px;">Tipo</div>
<div class="t" style="left:370.80px;top:6.40px;letter-spacing:-0.010px;color:#000;font-size:12px;">Data de modificação</div>
<svg style="position:absolute;left:5px;top:25px" width="16" height="16" viewBox="0 0 16 16"><path d="M0 3Q0 2 1 2H7L8.5 4H15Q16 4 16 5V8H0Z" fill="#efab08"/><path d="M0 6.2H16V14Q16 15 15 15H1Q0 15 0 14Z" fill="url(#fg)"/><rect x="0" y="6.2" width="16" height=".8" fill="#ffeaa0" opacity=".8"/><path d="M0 14H16V14.2Q16 15 15 15H1Q0 15 0 14.2Z" fill="#e6a51a"/></svg>
<div class="t" style="left:22.60px;top:28.10px;letter-spacing:0.012px;color:#000;font-size:12px;">Atto Net4 HD</div>
<div class="t" style="left:250.90px;top:28.10px;letter-spacing:-0.233px;color:#000;font-size:12px;">Pasta de arquivos</div>
<div class="t" style="left:370.80px;top:28.10px;letter-spacing:-0.375px;color:#000;font-size:12px;">13/06/2024 13:24:34</div>
<svg style="position:absolute;left:5px;top:44px" width="16" height="16" viewBox="0 0 16 16"><path d="M0 3Q0 2 1 2H7L8.5 4H15Q16 4 16 5V8H0Z" fill="#efab08"/><path d="M0 6.2H16V14Q16 15 15 15H1Q0 15 0 14Z" fill="url(#fg)"/><rect x="0" y="6.2" width="16" height=".8" fill="#ffeaa0" opacity=".8"/><path d="M0 14H16V14.2Q16 15 15 15H1Q0 15 0 14.2Z" fill="#e6a51a"/></svg>
<div class="t" style="left:22.60px;top:47.10px;letter-spacing:-1.200px;color:#000;font-size:12px;">BKPs</div>
<div class="t" style="left:250.90px;top:47.10px;letter-spacing:-0.233px;color:#000;font-size:12px;">Pasta de arquivos</div>
<div class="t" style="left:370.80px;top:47.10px;letter-spacing:-0.375px;color:#000;font-size:12px;">01/06/2024 13:24:34</div>
<svg style="position:absolute;left:5px;top:63px" width="16" height="16" viewBox="0 0 16 16"><path d="M0 3Q0 2 1 2H7L8.5 4H15Q16 4 16 5V8H0Z" fill="#efab08"/><path d="M0 6.2H16V14Q16 15 15 15H1Q0 15 0 14Z" fill="url(#fg)"/><rect x="0" y="6.2" width="16" height=".8" fill="#ffeaa0" opacity=".8"/><path d="M0 14H16V14.2Q16 15 15 15H1Q0 15 0 14.2Z" fill="#e6a51a"/></svg>
<div class="t" style="left:22.60px;top:66.10px;letter-spacing:-0.033px;color:#000;font-size:12px;">DelinvFile-Portable</div>
<div class="t" style="left:250.90px;top:66.10px;letter-spacing:-0.233px;color:#000;font-size:12px;">Pasta de arquivos</div>
<div class="t" style="left:370.80px;top:66.10px;letter-spacing:-0.375px;color:#000;font-size:12px;">12/06/2024 13:24:34</div>
<svg style="position:absolute;left:5px;top:82px" width="16" height="16" viewBox="0 0 16 16"><path d="M0 3Q0 2 1 2H7L8.5 4H15Q16 4 16 5V8H0Z" fill="#efab08"/><path d="M0 6.2H16V14Q16 15 15 15H1Q0 15 0 14Z" fill="url(#fg)"/><rect x="0" y="6.2" width="16" height=".8" fill="#ffeaa0" opacity=".8"/><path d="M0 14H16V14.2Q16 15 15 15H1Q0 15 0 14.2Z" fill="#e6a51a"/></svg>
<div class="t" style="left:22.60px;top:85.10px;letter-spacing:-0.031px;color:#000;font-size:12px;">Espiritualismo</div>
<div class="t" style="left:250.90px;top:85.10px;letter-spacing:-0.233px;color:#000;font-size:12px;">Pasta de arquivos</div>
<div class="t" style="left:370.80px;top:85.10px;letter-spacing:-0.375px;color:#000;font-size:12px;">01/06/2024 13:24:34</div>
<svg style="position:absolute;left:5px;top:101px" width="16" height="16" viewBox="0 0 16 16"><path d="M0 3Q0 2 1 2H7L8.5 4H15Q16 4 16 5V8H0Z" fill="#efab08"/><path d="M0 6.2H16V14Q16 15 15 15H1Q0 15 0 14Z" fill="url(#fg)"/><rect x="0" y="6.2" width="16" height=".8" fill="#ffeaa0" opacity=".8"/><path d="M0 14H16V14.2Q16 15 15 15H1Q0 15 0 14.2Z" fill="#e6a51a"/></svg>
<div class="t" style="left:22.60px;top:104.10px;letter-spacing:-0.339px;color:#000;font-size:12px;">Esquemas Técnicos e Man...</div>
<div class="t" style="left:250.90px;top:104.10px;letter-spacing:-0.233px;color:#000;font-size:12px;">Pasta de arquivos</div>
<div class="t" style="left:370.80px;top:104.10px;letter-spacing:-0.375px;color:#000;font-size:12px;">13/06/2024 13:24:34</div>
<svg style="position:absolute;left:5px;top:120px" width="16" height="16" viewBox="0 0 16 16"><path d="M0 3Q0 2 1 2H7L8.5 4H15Q16 4 16 5V8H0Z" fill="#efab08"/><path d="M0 6.2H16V14Q16 15 15 15H1Q0 15 0 14Z" fill="url(#fg)"/><rect x="0" y="6.2" width="16" height=".8" fill="#ffeaa0" opacity=".8"/><path d="M0 14H16V14.2Q16 15 15 15H1Q0 15 0 14.2Z" fill="#e6a51a"/></svg>
<div class="t" style="left:22.60px;top:123.10px;letter-spacing:-0.038px;color:#000;font-size:12px;">Inventários e Documentos</div>
<div class="t" style="left:250.90px;top:123.10px;letter-spacing:-0.233px;color:#000;font-size:12px;">Pasta de arquivos</div>
<div class="t" style="left:370.80px;top:123.10px;letter-spacing:-0.375px;color:#000;font-size:12px;">01/06/2024 13:24:34</div>
<svg style="position:absolute;left:5px;top:139px" width="16" height="16" viewBox="0 0 16 16"><path d="M0 3Q0 2 1 2H7L8.5 4H15Q16 4 16 5V8H0Z" fill="#efab08"/><path d="M0 6.2H16V14Q16 15 15 15H1Q0 15 0 14Z" fill="url(#fg)"/><rect x="0" y="6.2" width="16" height=".8" fill="#ffeaa0" opacity=".8"/><path d="M0 14H16V14.2Q16 15 15 15H1Q0 15 0 14.2Z" fill="#e6a51a"/></svg>
<div class="t" style="left:22.60px;top:142.10px;letter-spacing:-0.069px;color:#000;font-size:12px;">Musicas</div>
<div class="t" style="left:250.90px;top:142.10px;letter-spacing:-0.233px;color:#000;font-size:12px;">Pasta de arquivos</div>
<div class="t" style="left:370.80px;top:142.10px;letter-spacing:-0.375px;color:#000;font-size:12px;">15/06/2024 13:24:34</div>
<svg style="position:absolute;left:5px;top:158px" width="16" height="16" viewBox="0 0 16 16"><path d="M0 3Q0 2 1 2H7L8.5 4H15Q16 4 16 5V8H0Z" fill="#efab08"/><path d="M0 6.2H16V14Q16 15 15 15H1Q0 15 0 14Z" fill="url(#fg)"/><rect x="0" y="6.2" width="16" height=".8" fill="#ffeaa0" opacity=".8"/><path d="M0 14H16V14.2Q16 15 15 15H1Q0 15 0 14.2Z" fill="#e6a51a"/></svg>
<div class="t" style="left:22.60px;top:161.10px;letter-spacing:-0.285px;color:#000;font-size:12px;">Nossas Imagens e Fotos</div>
<div class="t" style="left:250.90px;top:161.10px;letter-spacing:-0.233px;color:#000;font-size:12px;">Pasta de arquivos</div>
<div class="t" style="left:370.80px;top:161.10px;letter-spacing:-0.375px;color:#000;font-size:12px;">12/06/2024 13:24:34</div>
<svg style="position:absolute;left:5px;top:177px" width="16" height="16" viewBox="0 0 16 16"><path d="M0 3Q0 2 1 2H7L8.5 4H15Q16 4 16 5V8H0Z" fill="#efab08"/><path d="M0 6.2H16V14Q16 15 15 15H1Q0 15 0 14Z" fill="url(#fg)"/><rect x="0" y="6.2" width="16" height=".8" fill="#ffeaa0" opacity=".8"/><path d="M0 14H16V14.2Q16 15 15 15H1Q0 15 0 14.2Z" fill="#e6a51a"/></svg>
<div class="t" style="left:22.60px;top:180.10px;letter-spacing:-0.242px;color:#000;font-size:12px;">Operação Cavalo de Tróia</div>
<div class="t" style="left:250.90px;top:180.10px;letter-spacing:-0.233px;color:#000;font-size:12px;">Pasta de arquivos</div>
<div class="t" style="left:370.80px;top:180.10px;letter-spacing:-0.375px;color:#000;font-size:12px;">13/06/2024 13:24:34</div>
<svg style="position:absolute;left:5px;top:196px" width="16" height="16" viewBox="0 0 16 16"><path d="M0 3Q0 2 1 2H7L8.5 4H15Q16 4 16 5V8H0Z" fill="#efab08"/><path d="M0 6.2H16V14Q16 15 15 15H1Q0 15 0 14Z" fill="url(#fg)"/><rect x="0" y="6.2" width="16" height=".8" fill="#ffeaa0" opacity=".8"/><path d="M0 14H16V14.2Q16 15 15 15H1Q0 15 0 14.2Z" fill="#e6a51a"/></svg>
<div class="t" style="left:22.60px;top:199.10px;letter-spacing:-0.177px;color:#000;font-size:12px;">Vídeo, Shows e Afins</div>
<div class="t" style="left:250.90px;top:199.10px;letter-spacing:-0.233px;color:#000;font-size:12px;">Pasta de arquivos</div>
<div class="t" style="left:370.80px;top:199.10px;letter-spacing:-0.375px;color:#000;font-size:12px;">01/06/2024 13:24:34</div>
<svg style="position:absolute;left:5px;top:215px" width="16" height="16" viewBox="0 0 16 16"><path d="M0 3Q0 2 1 2H7L8.5 4H15Q16 4 16 5V8H0Z" fill="#efab08"/><path d="M0 6.2H16V14Q16 15 15 15H1Q0 15 0 14Z" fill="url(#fg)"/><rect x="0" y="6.2" width="16" height=".8" fill="#ffeaa0" opacity=".8"/><path d="M0 14H16V14.2Q16 15 15 15H1Q0 15 0 14.2Z" fill="#e6a51a"/></svg>
<div class="t" style="left:22.60px;top:218.10px;letter-spacing:-0.342px;color:#000;font-size:12px;">Vídeos Gravados de Treina...</div>
<div class="t" style="left:250.90px;top:218.10px;letter-spacing:-0.233px;color:#000;font-size:12px;">Pasta de arquivos</div>
<div class="t" style="left:370.80px;top:218.10px;letter-spacing:-0.375px;color:#000;font-size:12px;">13/06/2024 13:24:34</div>
<svg style="position:absolute;left:5px;top:234px" width="16" height="16" viewBox="0 0 16 16"><path d="M0 3Q0 2 1 2H7L8.5 4H15Q16 4 16 5V8H0Z" fill="#efab08"/><path d="M0 6.2H16V14Q16 15 15 15H1Q0 15 0 14Z" fill="url(#fg)"/><rect x="0" y="6.2" width="16" height=".8" fill="#ffeaa0" opacity=".8"/><path d="M0 14H16V14.2Q16 15 15 15H1Q0 15 0 14.2Z" fill="#e6a51a"/></svg>
<div class="t" style="left:22.60px;top:237.10px;letter-spacing:-0.168px;color:#000;font-size:12px;">Z_Install</div>
<div class="t" style="left:250.90px;top:237.10px;letter-spacing:-0.233px;color:#000;font-size:12px;">Pasta de arquivos</div>
<div class="t" style="left:370.80px;top:237.10px;letter-spacing:-0.375px;color:#000;font-size:12px;">01/06/2024 13:24:34</div>
<svg style="position:absolute;left:7px;top:254px" width="12" height="16" viewBox="0 0 12 16"><path d="M.5 .5H8.5L11.5 3.5V15.5H.5Z" fill="#f9f9f9" stroke="#6e6e6e"/><path d="M8.5 .5V3.5H11.5" fill="none" stroke="#6e6e6e" stroke-width=".8"/></svg>
<div class="t" style="left:22.60px;top:256.10px;letter-spacing:-0.334px;color:#000;font-size:12px;">071020.mp4</div>
<div class="t" style="left:180.30px;top:256.10px;letter-spacing:-0.610px;color:#000;font-size:12px;">153.535 KB</div>
<div class="t" style="left:250.70px;top:256.10px;letter-spacing:-0.219px;color:#000;font-size:12px;">VLC.mp4</div>
<div class="t" style="left:370.80px;top:256.10px;letter-spacing:-0.375px;color:#000;font-size:12px;">07/10/2020 13:24:34</div>
<svg style="position:absolute;left:7px;top:273px" width="12" height="16" viewBox="0 0 12 16"><path d="M.5 .5H8.5L11.5 3.5V15.5H.5Z" fill="#f9f9f9" stroke="#6e6e6e"/><path d="M8.5 .5V3.5H11.5" fill="none" stroke="#6e6e6e" stroke-width=".8"/><defs><linearGradient id="pg" x1="0" y1="0" x2="0" y2="1"><stop offset="0" stop-color="#1565d8"/><stop offset="1" stop-color="#39b6f5"/></linearGradient></defs><rect x="3" y="5" width="6" height="6" fill="url(#pg)"/><path d="M3 11L5.5 8L9 11Z" fill="#6fd3ff"/><circle cx="7.3" cy="6.6" r=".8" fill="#fff"/></svg>
<div class="t" style="left:22.60px;top:275.10px;letter-spacing:0.043px;color:#000;font-size:12px;">barra.png</div>
<div class="t" style="left:206.80px;top:275.10px;letter-spacing:-0.493px;color:#000;font-size:12px;">46 KB</div>
<div class="t" style="left:250.70px;top:275.10px;letter-spacing:-0.052px;color:#000;font-size:12px;">Arquivo PNG</div>
<div class="t" style="left:370.80px;top:275.10px;letter-spacing:-0.375px;color:#000;font-size:12px;">10/02/2021 13:24:34</div>
<svg style="position:absolute;left:7px;top:292px" width="12" height="16" viewBox="0 0 12 16"><path d="M.5 .5H8.5L11.5 3.5V15.5H.5Z" fill="#f9f9f9" stroke="#6e6e6e"/><path d="M8.5 .5V3.5H11.5" fill="none" stroke="#6e6e6e" stroke-width=".8"/><defs><linearGradient id="pg" x1="0" y1="0" x2="0" y2="1"><stop offset="0" stop-color="#1565d8"/><stop offset="1" stop-color="#39b6f5"/></linearGradient></defs><rect x="3" y="5" width="6" height="6" fill="url(#pg)"/><path d="M3 11L5.5 8L9 11Z" fill="#6fd3ff"/><circle cx="7.3" cy="6.6" r=".8" fill="#fff"/></svg>
<div class="t" style="left:22.60px;top:294.10px;letter-spacing:0.320px;color:#000;font-size:12px;">menu.png</div>
<div class="t" style="left:201.00px;top:294.10px;letter-spacing:-0.569px;color:#000;font-size:12px;">518 KB</div>
<div class="t" style="left:250.70px;top:294.10px;letter-spacing:-0.052px;color:#000;font-size:12px;">Arquivo PNG</div>
<div class="t" style="left:370.80px;top:294.10px;letter-spacing:-0.375px;color:#000;font-size:12px;">21/01/2021 13:24:34</div>
<svg style="position:absolute;left:7px;top:311px" width="12" height="16" viewBox="0 0 12 16"><path d="M.5 .5H8.5L11.5 3.5V15.5H.5Z" fill="#f9f9f9" stroke="#6e6e6e"/><path d="M8.5 .5V3.5H11.5" fill="none" stroke="#6e6e6e" stroke-width=".8"/><defs><linearGradient id="pg" x1="0" y1="0" x2="0" y2="1"><stop offset="0" stop-color="#1565d8"/><stop offset="1" stop-color="#39b6f5"/></linearGradient></defs><rect x="3" y="5" width="6" height="6" fill="url(#pg)"/><path d="M3 11L5.5 8L9 11Z" fill="#6fd3ff"/><circle cx="7.3" cy="6.6" r=".8" fill="#fff"/></svg>
<div class="t" style="left:22.60px;top:313.10px;letter-spacing:-0.056px;color:#000;font-size:12px;">menu_2.png</div>
<div class="t" style="left:201.00px;top:313.10px;letter-spacing:-0.569px;color:#000;font-size:12px;">489 KB</div>
<div class="t" style="left:250.70px;top:313.10px;letter-spacing:-0.052px;color:#000;font-size:12px;">Arquivo PNG</div>
<div class="t" style="left:370.80px;top:313.10px;letter-spacing:-0.375px;color:#000;font-size:12px;">10/02/2021 13:24:34</div>
<svg style="position:absolute;left:5px;top:330px" width="17" height="15" viewBox="0 0 17 15"><path d="M.5 12.5V3Q.5 1.5 2 1.5H3L4 .5H9V2.5H14.5V12.5Z" fill="#fff799" stroke="#a89f00"/><path d="M1 13.5H15.5V9" stroke="#000" stroke-width="1" fill="none"/><path d="M1.5 11.5H13" stroke="#f4b0a0" stroke-width=".8" stroke-dasharray="1 1"/><rect x="6.5" y=".5" width="9.5" height="9.5" fill="#fff" stroke="#0000ff" stroke-width="1.1"/><path d="M8.5 2.5H13.6V3.8L10.3 7.3H13.8V8.5H8.3V7.2L11.6 3.7H8.5Z" fill="#0000ff"/></svg>
<div class="t" style="left:22.60px;top:332.10px;letter-spacing:-0.383px;color:#000;font-size:12px;">takeout-20210528T132244...</div>
<div class="t" style="left:185.60px;top:332.10px;letter-spacing:-0.477px;color:#000;font-size:12px;">13.623.2...</div>
<div class="t" style="left:250.70px;top:332.10px;letter-spacing:0.047px;color:#000;font-size:12px;">zip Archive</div>
<div class="t" style="left:370.80px;top:332.10px;letter-spacing:-0.375px;color:#000;font-size:12px;">29/05/2021 13:24:34</div>
<svg style="position:absolute;left:5px;top:349px" width="17" height="15" viewBox="0 0 17 15"><path d="M.5 12.5V3Q.5 1.5 2 1.5H3L4 .5H9V2.5H14.5V12.5Z" fill="#fff799" stroke="#a89f00"/><path d="M1 13.5H15.5V9" stroke="#000" stroke-width="1" fill="none"/><path d="M1.5 11.5H13" stroke="#f4b0a0" stroke-width=".8" stroke-dasharray="1 1"/><rect x="6.5" y=".5" width="9.5" height="9.5" fill="#fff" stroke="#0000ff" stroke-width="1.1"/><path d="M8.5 2.5H13.6V3.8L10.3 7.3H13.8V8.5H8.3V7.2L11.6 3.7H8.5Z" fill="#0000ff"/></svg>
<div class="t" style="left:22.60px;top:351.10px;letter-spacing:-0.383px;color:#000;font-size:12px;">takeout-20210528T132244...</div>
<div class="t" style="left:185.60px;top:351.10px;letter-spacing:-0.477px;color:#000;font-size:12px;">30.743.9...</div>
<div class="t" style="left:250.70px;top:351.10px;letter-spacing:0.047px;color:#000;font-size:12px;">zip Archive</div>
<div class="t" style="left:370.80px;top:351.10px;letter-spacing:-0.375px;color:#000;font-size:12px;">29/05/2021 13:24:34</div>
<svg style="position:absolute;left:5px;top:368px" width="17" height="15" viewBox="0 0 17 15"><path d="M.5 12.5V3Q.5 1.5 2 1.5H3L4 .5H9V2.5H14.5V12.5Z" fill="#fff799" stroke="#a89f00"/><path d="M1 13.5H15.5V9" stroke="#000" stroke-width="1" fill="none"/><path d="M1.5 11.5H13" stroke="#f4b0a0" stroke-width=".8" stroke-dasharray="1 1"/><rect x="6.5" y=".5" width="9.5" height="9.5" fill="#fff" stroke="#0000ff" stroke-width="1.1"/><path d="M8.5 2.5H13.6V3.8L10.3 7.3H13.8V8.5H8.3V7.2L11.6 3.7H8.5Z" fill="#0000ff"/></svg>
<div class="t" style="left:22.60px;top:370.10px;letter-spacing:-0.311px;color:#000;font-size:12px;">takeout-20210529T111258...</div>
<div class="t" style="left:185.60px;top:370.10px;letter-spacing:-0.477px;color:#000;font-size:12px;">7.303.24...</div>
<div class="t" style="left:250.70px;top:370.10px;letter-spacing:0.047px;color:#000;font-size:12px;">zip Archive</div>
<div class="t" style="left:370.80px;top:370.10px;letter-spacing:-0.375px;color:#000;font-size:12px;">29/05/2021 13:24:34</div>
<svg style="position:absolute;left:5px;top:387px" width="17" height="15" viewBox="0 0 17 15"><path d="M.5 12.5V3Q.5 1.5 2 1.5H3L4 .5H9V2.5H14.5V12.5Z" fill="#fff799" stroke="#a89f00"/><path d="M1 13.5H15.5V9" stroke="#000" stroke-width="1" fill="none"/><path d="M1.5 11.5H13" stroke="#f4b0a0" stroke-width=".8" stroke-dasharray="1 1"/><rect x="6.5" y=".5" width="9.5" height="9.5" fill="#fff" stroke="#0000ff" stroke-width="1.1"/><path d="M8.5 2.5H13.6V3.8L10.3 7.3H13.8V8.5H8.3V7.2L11.6 3.7H8.5Z" fill="#0000ff"/></svg>
<div class="t" style="left:22.60px;top:389.10px;letter-spacing:-0.383px;color:#000;font-size:12px;">takeout-20210601T125317...</div>
<div class="t" style="left:185.60px;top:389.10px;letter-spacing:-0.477px;color:#000;font-size:12px;">5.305.33...</div>
<div class="t" style="left:250.70px;top:389.10px;letter-spacing:0.047px;color:#000;font-size:12px;">zip Archive</div>
<div class="t" style="left:370.80px;top:389.10px;letter-spacing:-0.375px;color:#000;font-size:12px;">01/06/2021 13:24:34</div>
</div>
<div style="position:absolute;left:20px;top:608px;width:267px;height:2px;background:#7a7a7a;border-radius:1px"></div>
<div style="position:absolute;left:398px;top:159px;width:499px;height:21px;background:#99b4d1"></div>
<div class="t" style="left:402.70px;top:163.40px;letter-spacing:0.644px;color:#000;font-size:12px;">/mnt/sda1/</div>
<div style="position:absolute;left:398px;top:180px;width:499px;height:439px;background:#fff;border:1px solid #8e969e;box-sizing:border-box"></div>
<div style="position:absolute;left:693px;top:182px;width:1px;height:24px;background:#e5e5e5"></div>
<div style="position:absolute;left:763px;top:182px;width:1px;height:24px;background:#e5e5e5"></div>
<div style="position:absolute;left:401px;top:206px;width:1px;height:395px;background:#bcd8f8"></div>
<div style="position:absolute;left:693px;top:206px;width:1px;height:395px;background:#edf3fc"></div>
<div style="position:absolute;left:763px;top:206px;width:1px;height:395px;background:#edf3fc"></div>
<div style="position:absolute;left:399px;top:601px;width:497px;height:16px;background:#f0f0f0"></div>
<div style="position:absolute;left:399px;top:617px;width:497px;height:1px;background:#fff"></div>
<div style="position:absolute;left:399px;top:181px;width:496px;height:420px;overflow:hidden">
<div class="t" style="left:7.00px;top:6.40px;letter-spacing:-0.465px;color:#000;font-size:12px;">Nome</div>
<svg style="position:absolute;left:145px;top:1px" width="8" height="5" viewBox="0 0 8 5"><path d="M.5 4L4 .8L7.5 4" stroke="#555" stroke-width="1" fill="none"/></svg>
<div class="t" style="left:309.40px;top:6.40px;letter-spacing:0.007px;color:#000;font-size:12px;">Tamanho</div>
<div class="t" style="left:370.60px;top:6.40px;letter-spacing:-0.010px;color:#000;font-size:12px;">Data de modificação</div>
<svg style="position:absolute;left:5px;top:25px" width="16" height="16" viewBox="0 0 16 16"><path d="M0 3Q0 2 1 2H7L8.5 4H15Q16 4 16 5V8H0Z" fill="#efab08"/><path d="M0 6.2H16V14Q16 15 15 15H1Q0 15 0 14Z" fill="url(#fg)"/><rect x="0" y="6.2" width="16" height=".8" fill="#ffeaa0" opacity=".8"/><path d="M0 14H16V14.2Q16 15 15 15H1Q0 15 0 14.2Z" fill="#e6a51a"/></svg>
<svg style="position:absolute;left:5px;top:25px" width="16" height="16" viewBox="0 0 16 16"><path d="M5.5 12.5H11M6 12.5V7.5M4 9.5L6 7.3L8 9.5" stroke="#333" stroke-width="1.2" fill="none"/></svg>
<div style="position:absolute;left:22px;top:26px;width:10px;height:16px;border:1px dotted #000;box-sizing:border-box"></div>
<div class="t" style="left:23.40px;top:28.10px;letter-spacing:-0.255px;color:#000;font-size:12px;">..</div>
<div class="t" style="left:370.60px;top:28.10px;letter-spacing:-0.375px;color:#000;font-size:12px;">31/05/2024 19:39:41</div>
<svg style="position:absolute;left:5px;top:44px" width="16" height="16" viewBox="0 0 16 16"><path d="M0 3Q0 2 1 2H7L8.5 4H15Q16 4 16 5V8H0Z" fill="#efab08"/><path d="M0 6.2H16V14Q16 15 15 15H1Q0 15 0 14Z" fill="url(#fg)"/><rect x="0" y="6.2" width="16" height=".8" fill="#ffeaa0" opacity=".8"/><path d="M0 14H16V14.2Q16 15 15 15H1Q0 15 0 14.2Z" fill="#e6a51a"/></svg>
<div class="t" style="left:22.60px;top:47.10px;letter-spacing:0.012px;color:#000;font-size:12px;">Atto Net4 HD</div>
<div class="t" style="left:370.60px;top:47.10px;letter-spacing:-0.375px;color:#000;font-size:12px;">01/06/2024 13:25:43</div>
<svg style="position:absolute;left:5px;top:63px" width="16" height="16" viewBox="0 0 16 16"><path d="M0 3Q0 2 1 2H7L8.5 4H15Q16 4 16 5V8H0Z" fill="#efab08"/><path d="M0 6.2H16V14Q16 15 15 15H1Q0 15 0 14Z" fill="url(#fg)"/><rect x="0" y="6.2" width="16" height=".8" fill="#ffeaa0" opacity=".8"/><path d="M0 14H16V14.2Q16 15 15 15H1Q0 15 0 14.2Z" fill="#e6a51a"/></svg>
<div class="t" style="left:22.60px;top:66.10px;letter-spacing:-0.147px;color:#000;font-size:12px;">AutomaÃ§Ã£o - CLP</div>
<div class="t" style="left:370.60px;top:66.10px;letter-spacing:-0.375px;color:#000;font-size:12px;">01/06/2024 13:19:35</div>
<svg style="position:absolute;left:5px;top:82px" width="16" height="16" viewBox="0 0 16 16"><path d="M0 3Q0 2 1 2H7L8.5 4H15Q16 4 16 5V8H0Z" fill="#efab08"/><path d="M0 6.2H16V14Q16 15 15 15H1Q0 15 0 14Z" fill="url(#fg)"/><rect x="0" y="6.2" width="16" height=".8" fill="#ffeaa0" opacity=".8"/><path d="M0 14H16V14.2Q16 15 15 15H1Q0 15 0 14.2Z" fill="#e6a51a"/></svg>
<div class="t" style="left:22.60px;top:85.10px;letter-spacing:-1.200px;color:#000;font-size:12px;">BKPs</div>
<div class="t" style="left:370.60px;top:85.10px;letter-spacing:-0.375px;color:#000;font-size:12px;">01/06/2024 13:33:07</div>
<svg style="position:absolute;left:5px;top:101px" width="16" height="16" viewBox="0 0 16 16"><path d="M0 3Q0 2 1 2H7L8.5 4H15Q16 4 16 5V8H0Z" fill="#efab08"/><path d="M0 6.2H16V14Q16 15 15 15H1Q0 15 0 14Z" fill="url(#fg)"/><rect x="0" y="6.2" width="16" height=".8" fill="#ffeaa0" opacity=".8"/><path d="M0 14H16V14.2Q16 15 15 15H1Q0 15 0 14.2Z" fill="#e6a51a"/></svg>
<div class="t" style="left:22.60px;top:104.10px;letter-spacing:-0.033px;color:#000;font-size:12px;">DelinvFile-Portable</div>
<div class="t" style="left:370.60px;top:104.10px;letter-spacing:-0.375px;color:#000;font-size:12px;">01/06/2024 13:33:28</div>
<svg style="position:absolute;left:5px;top:120px" width="16" height="16" viewBox="0 0 16 16"><path d="M0 3Q0 2 1 2H7L8.5 4H15Q16 4 16 5V8H0Z" fill="#efab08"/><path d="M0 6.2H16V14Q16 15 15 15H1Q0 15 0 14Z" fill="url(#fg)"/><rect x="0" y="6.2" width="16" height=".8" fill="#ffeaa0" opacity=".8"/><path d="M0 14H16V14.2Q16 15 15 15H1Q0 15 0 14.2Z" fill="#e6a51a"/></svg>
<div class="t" style="left:22.60px;top:123.10px;letter-spacing:-0.031px;color:#000;font-size:12px;">Espiritualismo</div>
<div class="t" style="left:370.60px;top:123.10px;letter-spacing:-0.375px;color:#000;font-size:12px;">01/06/2024 13:37:26</div>
<svg style="position:absolute;left:5px;top:139px" width="16" height="16" viewBox="0 0 16 16"><path d="M0 3Q0 2 1 2H7L8.5 4H15Q16 4 16 5V8H0Z" fill="#efab08"/><path d="M0 6.2H16V14Q16 15 15 15H1Q0 15 0 14Z" fill="url(#fg)"/><rect x="0" y="6.2" width="16" height=".8" fill="#ffeaa0" opacity=".8"/><path d="M0 14H16V14.2Q16 15 15 15H1Q0 15 0 14.2Z" fill="#e6a51a"/></svg>
<div class="t" style="left:22.60px;top:142.10px;letter-spacing:-0.162px;color:#000;font-size:12px;">Esquemas TÃ©cnicos e Manuais de Equipamentos</div>
<div class="t" style="left:370.60px;top:142.10px;letter-spacing:-0.375px;color:#000;font-size:12px;">01/06/2024 13:24:34</div>
<svg style="position:absolute;left:5px;top:158px" width="16" height="16" viewBox="0 0 16 16"><path d="M0 3Q0 2 1 2H7L8.5 4H15Q16 4 16 5V8H0Z" fill="#efab08"/><path d="M0 6.2H16V14Q16 15 15 15H1Q0 15 0 14Z" fill="url(#fg)"/><rect x="0" y="6.2" width="16" height=".8" fill="#ffeaa0" opacity=".8"/><path d="M0 14H16V14.2Q16 15 15 15H1Q0 15 0 14.2Z" fill="#e6a51a"/></svg>
<div class="t" style="left:22.60px;top:161.10px;letter-spacing:-0.069px;color:#000;font-size:12px;">Musicas</div>
<div class="t" style="left:370.60px;top:161.10px;letter-spacing:-0.375px;color:#000;font-size:12px;">01/06/2024 14:14:41</div>
<svg style="position:absolute;left:5px;top:177px" width="16" height="16" viewBox="0 0 16 16"><path d="M0 3Q0 2 1 2H7L8.5 4H15Q16 4 16 5V8H0Z" fill="#efab08"/><path d="M0 6.2H16V14Q16 15 15 15H1Q0 15 0 14Z" fill="url(#fg)"/><rect x="0" y="6.2" width="16" height=".8" fill="#ffeaa0" opacity=".8"/><path d="M0 14H16V14.2Q16 15 15 15H1Q0 15 0 14.2Z" fill="#e6a51a"/></svg>
<div class="t" style="left:22.60px;top:180.10px;letter-spacing:-0.272px;color:#000;font-size:12px;">OperaÃ§Ã£o Cavalo de TrÃ³ia</div>
<div class="t" style="left:370.60px;top:180.10px;letter-spacing:-0.375px;color:#000;font-size:12px;">01/06/2024 13:35:41</div>
<svg style="position:absolute;left:7px;top:197px" width="12" height="16" viewBox="0 0 12 16"><path d="M.5 .5H8.5L11.5 3.5V15.5H.5Z" fill="#f9f9f9" stroke="#6e6e6e"/><path d="M8.5 .5V3.5H11.5" fill="none" stroke="#6e6e6e" stroke-width=".8"/></svg>
<div class="t" style="left:22.60px;top:199.10px;letter-spacing:-0.334px;color:#000;font-size:12px;">071020.mp4</div>
<div class="t" style="left:300.40px;top:199.10px;letter-spacing:-0.610px;color:#000;font-size:12px;">153.535 KB</div>
<div class="t" style="left:370.60px;top:199.10px;letter-spacing:-0.375px;color:#000;font-size:12px;">07/10/2020 18:24:47</div>
<svg style="position:absolute;left:7px;top:216px" width="12" height="16" viewBox="0 0 12 16"><path d="M.5 .5H8.5L11.5 3.5V15.5H.5Z" fill="#f9f9f9" stroke="#6e6e6e"/><path d="M8.5 .5V3.5H11.5" fill="none" stroke="#6e6e6e" stroke-width=".8"/><defs><linearGradient id="pg" x1="0" y1="0" x2="0" y2="1"><stop offset="0" stop-color="#1565d8"/><stop offset="1" stop-color="#39b6f5"/></linearGradient></defs><rect x="3" y="5" width="6" height="6" fill="url(#pg)"/><path d="M3 11L5.5 8L9 11Z" fill="#6fd3ff"/><circle cx="7.3" cy="6.6" r=".8" fill="#fff"/></svg>
<div class="t" style="left:22.60px;top:218.10px;letter-spacing:0.043px;color:#000;font-size:12px;">barra.png</div>
<div class="t" style="left:326.90px;top:218.10px;letter-spacing:-0.493px;color:#000;font-size:12px;">46 KB</div>
<div class="t" style="left:370.60px;top:218.10px;letter-spacing:-0.375px;color:#000;font-size:12px;">10/02/2021 15:20:33</div>
<svg style="position:absolute;left:7px;top:235px" width="12" height="16" viewBox="0 0 12 16"><path d="M.5 .5H8.5L11.5 3.5V15.5H.5Z" fill="#f9f9f9" stroke="#6e6e6e"/><path d="M8.5 .5V3.5H11.5" fill="none" stroke="#6e6e6e" stroke-width=".8"/><defs><linearGradient id="pg" x1="0" y1="0" x2="0" y2="1"><stop offset="0" stop-color="#1565d8"/><stop offset="1" stop-color="#39b6f5"/></linearGradient></defs><rect x="3" y="5" width="6" height="6" fill="url(#pg)"/><path d="M3 11L5.5 8L9 11Z" fill="#6fd3ff"/><circle cx="7.3" cy="6.6" r=".8" fill="#fff"/></svg>
<div class="t" style="left:22.60px;top:237.10px;letter-spacing:0.320px;color:#000;font-size:12px;">menu.png</div>
<div class="t" style="left:321.10px;top:237.10px;letter-spacing:-0.569px;color:#000;font-size:12px;">518 KB</div>
<div class="t" style="left:370.60px;top:237.10px;letter-spacing:-0.375px;color:#000;font-size:12px;">21/01/2021 10:50:10</div>
<svg style="position:absolute;left:7px;top:254px" width="12" height="16" viewBox="0 0 12 16"><path d="M.5 .5H8.5L11.5 3.5V15.5H.5Z" fill="#f9f9f9" stroke="#6e6e6e"/><path d="M8.5 .5V3.5H11.5" fill="none" stroke="#6e6e6e" stroke-width=".8"/><defs><linearGradient id="pg" x1="0" y1="0" x2="0" y2="1"><stop offset="0" stop-color="#1565d8"/><stop offset="1" stop-color="#39b6f5"/></linearGradient></defs><rect x="3" y="5" width="6" height="6" fill="url(#pg)"/><path d="M3 11L5.5 8L9 11Z" fill="#6fd3ff"/><circle cx="7.3" cy="6.6" r=".8" fill="#fff"/></svg>
<div class="t" style="left:22.60px;top:256.10px;letter-spacing:-0.056px;color:#000;font-size:12px;">menu_2.png</div>
<div class="t" style="left:321.10px;top:256.10px;letter-spacing:-0.569px;color:#000;font-size:12px;">489 KB</div>
<div class="t" style="left:370.60px;top:256.10px;letter-spacing:-0.375px;color:#000;font-size:12px;">10/02/2021 15:24:39</div>
<svg style="position:absolute;left:5px;top:273px" width="17" height="15" viewBox="0 0 17 15"><path d="M.5 12.5V3Q.5 1.5 2 1.5H3L4 .5H9V2.5H14.5V12.5Z" fill="#fff799" stroke="#a89f00"/><path d="M1 13.5H15.5V9" stroke="#000" stroke-width="1" fill="none"/><path d="M1.5 11.5H13" stroke="#f4b0a0" stroke-width=".8" stroke-dasharray="1 1"/><rect x="6.5" y=".5" width="9.5" height="9.5" fill="#fff" stroke="#0000ff" stroke-width="1.1"/><path d="M8.5 2.5H13.6V3.8L10.3 7.3H13.8V8.5H8.3V7.2L11.6 3.7H8.5Z" fill="#0000ff"/></svg>
<div class="t" style="left:22.60px;top:275.10px;letter-spacing:-0.248px;color:#000;font-size:12px;">takeout-20210528T132244Z-001 - Rodrigo.zip</div>
<div class="t" style="left:305.70px;top:275.10px;letter-spacing:-0.477px;color:#000;font-size:12px;">13.623.2...</div>
<div class="t" style="left:370.60px;top:275.10px;letter-spacing:-0.375px;color:#000;font-size:12px;">29/05/2021 21:38:51</div>
<svg style="position:absolute;left:5px;top:292px" width="17" height="15" viewBox="0 0 17 15"><path d="M.5 12.5V3Q.5 1.5 2 1.5H3L4 .5H9V2.5H14.5V12.5Z" fill="#fff799" stroke="#a89f00"/><path d="M1 13.5H15.5V9" stroke="#000" stroke-width="1" fill="none"/><path d="M1.5 11.5H13" stroke="#f4b0a0" stroke-width=".8" stroke-dasharray="1 1"/><rect x="6.5" y=".5" width="9.5" height="9.5" fill="#fff" stroke="#0000ff" stroke-width="1.1"/><path d="M8.5 2.5H13.6V3.8L10.3 7.3H13.8V8.5H8.3V7.2L11.6 3.7H8.5Z" fill="#0000ff"/></svg>
<div class="t" style="left:22.60px;top:294.10px;letter-spacing:-0.248px;color:#000;font-size:12px;">takeout-20210528T132244Z-002 - Rodrigo.zip</div>
<div class="t" style="left:305.70px;top:294.10px;letter-spacing:-0.477px;color:#000;font-size:12px;">30.743.9...</div>
<div class="t" style="left:370.60px;top:294.10px;letter-spacing:-0.375px;color:#000;font-size:12px;">29/05/2021 22:02:38</div>
<svg style="position:absolute;left:5px;top:311px" width="17" height="15" viewBox="0 0 17 15"><path d="M.5 12.5V3Q.5 1.5 2 1.5H3L4 .5H9V2.5H14.5V12.5Z" fill="#fff799" stroke="#a89f00"/><path d="M1 13.5H15.5V9" stroke="#000" stroke-width="1" fill="none"/><path d="M1.5 11.5H13" stroke="#f4b0a0" stroke-width=".8" stroke-dasharray="1 1"/><rect x="6.5" y=".5" width="9.5" height="9.5" fill="#fff" stroke="#0000ff" stroke-width="1.1"/><path d="M8.5 2.5H13.6V3.8L10.3 7.3H13.8V8.5H8.3V7.2L11.6 3.7H8.5Z" fill="#0000ff"/></svg>
<div class="t" style="left:22.60px;top:313.10px;letter-spacing:-0.307px;color:#000;font-size:12px;">takeout-20210529T111258Z-001 - Tereza.zip</div>
<div class="t" style="left:305.70px;top:313.10px;letter-spacing:-0.477px;color:#000;font-size:12px;">7.303.24...</div>
<div class="t" style="left:370.60px;top:313.10px;letter-spacing:-0.375px;color:#000;font-size:12px;">29/05/2021 21:33:48</div>
<svg style="position:absolute;left:5px;top:330px" width="17" height="15" viewBox="0 0 17 15"><path d="M.5 12.5V3Q.5 1.5 2 1.5H3L4 .5H9V2.5H14.5V12.5Z" fill="#fff799" stroke="#a89f00"/><path d="M1 13.5H15.5V9" stroke="#000" stroke-width="1" fill="none"/><path d="M1.5 11.5H13" stroke="#f4b0a0" stroke-width=".8" stroke-dasharray="1 1"/><rect x="6.5" y=".5" width="9.5" height="9.5" fill="#fff" stroke="#0000ff" stroke-width="1.1"/><path d="M8.5 2.5H13.6V3.8L10.3 7.3H13.8V8.5H8.3V7.2L11.6 3.7H8.5Z" fill="#0000ff"/></svg>
<div class="t" style="left:22.60px;top:332.10px;letter-spacing:-0.271px;color:#000;font-size:12px;">takeout-20210601T125317Z-001 - Viviane.zip</div>
<div class="t" style="left:305.70px;top:332.10px;letter-spacing:-0.477px;color:#000;font-size:12px;">5.305.33...</div>
<div class="t" style="left:370.60px;top:332.10px;letter-spacing:-0.375px;color:#000;font-size:12px;">01/06/2021 14:56:16</div>
</div>
<div style="position:absolute;left:417px;top:608px;width:348px;height:2px;background:#7a7a7a;border-radius:1px"></div>
<div style="position:absolute;left:393px;top:159px;width:5px;height:460px;background:#f0f0f0"></div>
<div class="t" style="left:3.60px;top:624.20px;letter-spacing:-0.443px;color:#000;font-size:12px;">0 B de 54,4 GB em 0 de 20</div>
<div class="t" style="left:346.30px;top:624.20px;letter-spacing:0.155px;color:#000;font-size:12px;">2 oculto</div>
<div class="t" style="left:400.60px;top:624.20px;letter-spacing:-0.448px;color:#000;font-size:12px;">0 B de 54,4 GB em 0 de 16</div>
<div style="position:absolute;left:1px;top:642px;width:896px;height:1px;background:#dadada"></div>
<div style="position:absolute;left:726px;top:643px;width:1px;height:19px;background:#dcdcdc"></div>
<div style="position:absolute;left:729px;top:643px;width:1px;height:19px;background:#dcdcdc"></div>
<div style="position:absolute;left:779px;top:643px;width:1px;height:19px;background:#dcdcdc"></div>
<div style="position:absolute;left:782px;top:643px;width:1px;height:19px;background:#dcdcdc"></div>
<div style="position:absolute;left:814px;top:643px;width:1px;height:19px;background:#dcdcdc"></div>
<div style="position:absolute;left:817px;top:643px;width:1px;height:19px;background:#dcdcdc"></div>
<div class="t" style="left:743.40px;top:646.40px;letter-spacing:-1.686px;color:#000;font-size:12px;">SCP</div>
<svg style="position:absolute;left:792px;top:644px" width="12" height="17" viewBox="0 0 12 17"><defs><linearGradient id="lkb" x1="0" y1="0" x2="1" y2="0"><stop offset="0" stop-color="#e9a800"/><stop offset=".25" stop-color="#ffd860"/><stop offset=".75" stop-color="#ffd255"/><stop offset="1" stop-color="#e4a400"/></linearGradient></defs><path d="M2.6 7.5V5.2Q2.6 1.3 6 1.3Q9.4 1.3 9.4 5.2V7.5" stroke="#f8bb12" stroke-width="2.1" fill="none"/><rect x="0" y="7" width="12" height="9" fill="url(#lkb)"/><rect x="0" y="15" width="12" height="1" fill="#e2a000"/><path d="M6 9.8Q7 9.8 7 10.8Q7 11.4 6.6 11.7V13.6H5.4V11.7Q5 11.4 5 10.8Q5 9.8 6 9.8Z" fill="#111"/></svg>
<div class="t" style="left:837.10px;top:646.40px;letter-spacing:-0.487px;color:#000;font-size:12px;">0:05:11</div>
<div style="position:absolute;left:893px;top:652px;width:2px;height:2px;background:#bdbdbd"></div>
<div style="position:absolute;left:890px;top:655px;width:2px;height:2px;background:#bdbdbd"></div>
<div style="position:absolute;left:893px;top:655px;width:2px;height:2px;background:#bdbdbd"></div>
<div style="position:absolute;left:887px;top:658px;width:2px;height:2px;background:#bdbdbd"></div>
<div style="position:absolute;left:890px;top:658px;width:2px;height:2px;background:#bdbdbd"></div>
<div style="position:absolute;left:893px;top:658px;width:2px;height:2px;background:#bdbdbd"></div>
<div style="position:absolute;left:3.7px;top:281.5px;width:173.60000000000002px;height:24.0px;border:2.4px solid #f00;border-radius:6px;box-sizing:border-box;box-shadow:inset 1px 1px 6px rgba(0,0,0,.2), 1px 1px 6px rgba(0,0,0,.15)"></div>
<div style="position:absolute;left:3.6px;top:357.5px;width:172.9px;height:21.5px;border:2.4px solid #f00;border-radius:6px;box-sizing:border-box;box-shadow:inset 1px 1px 6px rgba(0,0,0,.2), 1px 1px 6px rgba(0,0,0,.15)"></div>
<div style="position:absolute;left:398.3px;top:242.5px;width:146.2px;height:21.5px;border:2.4px solid #f00;border-radius:6px;box-sizing:border-box;box-shadow:inset 1px 1px 6px rgba(0,0,0,.2), 1px 1px 6px rgba(0,0,0,.15)"></div>
<div style="position:absolute;left:400.7px;top:319.6px;width:291.8px;height:24.69999999999999px;border:2.4px solid #f00;border-radius:6px;box-sizing:border-box;box-shadow:inset 1px 1px 6px rgba(0,0,0,.2), 1px 1px 6px rgba(0,0,0,.15)"></div>
<div style="position:absolute;left:400.7px;top:357.5px;width:187.59999999999997px;height:25.600000000000023px;border:2.4px solid #f00;border-radius:6px;box-sizing:border-box;box-shadow:inset 1px 1px 6px rgba(0,0,0,.2), 1px 1px 6px rgba(0,0,0,.15)"></div>
</body></html>
